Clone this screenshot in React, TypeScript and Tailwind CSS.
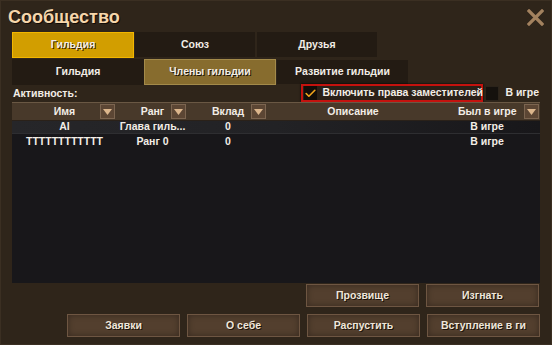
import { Check } from 'lucide-react'

const font = { fontFamily: '"Liberation Sans", Arial, sans-serif' }

function SortButton() {
  return (
    <div className="w-[15px] h-[15px] border border-[#7c6550] bg-[#5c4634] flex items-center justify-center">
      <svg width="9" height="6" viewBox="0 0 9 6">
        <polygon points="0,0 9,0 4.5,6" fill="#dcb68c" />
      </svg>
    </div>
  )
}

function HeaderCell({ label, width, sort }: { label: string; width: string; sort?: boolean }) {
  return (
    <div className={`${width} relative h-full flex items-center justify-center`}>
      <span>{label}</span>
      {sort && (
        <div className="absolute right-[2px] top-[1px]">
          <SortButton />
        </div>
      )}
    </div>
  )
}

const rows = [
  { name: 'AI', rank: 'Глава гиль...', contrib: '0', seen: 'В игре', active: true },
  { name: 'TTTTTTTTTTTT', rank: 'Ранг 0', contrib: '0', seen: 'В игре', active: false },
]

function ActionButton({ label }: { label: string }) {
  return (
    <div className="w-[113px] h-[23px] border border-[#6e5642] bg-[#533f2e] shadow-[inset_0_0_6px_rgba(0,0,0,0.35)] flex items-center justify-center text-[#efe6da] [text-shadow:1px_1px_0_#1a120b]">
      {label}
    </div>
  )
}

export default function App() {
  return (
    <div
      className="w-[552px] h-[345px] bg-[#2f251a] border border-[#3b2f22] flex flex-col text-[10.5px] font-bold text-[#f2ede6] whitespace-nowrap overflow-hidden"
      style={font}
    >
      {/* Title */}
      <div className="h-[31px] flex items-center justify-between pl-[7px] pr-[7px]">
        <span className="text-[18px] text-[#f6d6ab] [text-shadow:1px_1px_0_#120c07] pt-[2px]">Сообщество</span>
        <svg width="17" height="17" viewBox="0 0 17 17" className="mt-[2px]">
          <path d="M2 2 L15 15 M15 2 L2 15" stroke="#a3825f" strokeWidth="3.2" strokeLinecap="square" />
        </svg>
      </div>

      {/* Top tabs */}
      <div className="flex ml-[11px] h-[26px]">
        <div className="w-[122px] bg-[#d29e00] border border-[#f2b600] flex items-center justify-center [text-shadow:1px_1px_0_#3a2800]">
          Гильдия
        </div>
        <div className="w-[120px] ml-[1px] h-[25px] bg-[#231b13] flex items-center justify-center">Союз</div>
        <div className="w-[120px] ml-[2px] h-[25px] bg-[#231b13] flex items-center justify-center">Друзья</div>
      </div>

      {/* Sub tabs */}
      <div className="flex ml-[11px] mt-[1px] h-[26px]">
        <div className="w-[132px] bg-[#231b13] flex items-center justify-center">Гильдия</div>
        <div className="w-[132px] bg-[#876c2e] border border-[#a38a4a] flex items-center justify-center [text-shadow:1px_1px_0_#1e1508]">
          Члены гильдии
        </div>
        <div className="w-[131px] ml-[1px] mt-[1px] h-[24px] bg-[#231b13] flex items-center justify-center">
          Развитие гильдии
        </div>
      </div>

      {/* Activity row */}
      <div className="h-[18px] flex items-center ml-[12px] -mt-[1px]">
        <span className="pt-[2px]">Активность:</span>
        <div className="ml-auto flex items-center h-[18px] shrink-0">
          <div className="w-[182px] h-[18px] border-2 border-[#c4120e] bg-[#2a2017] flex items-center shrink-0 shadow-[0_0_2px_#000]">
            <div className="w-[13px] h-[14px] bg-[#120d09] ml-[1px] flex items-center justify-center shrink-0">
              <Check size={13} strokeWidth={3} color="#f2a51c" />
            </div>
            <span className="ml-[5px]">Включить права заместителей</span>
          </div>
          <div className="w-[14px] h-[15px] ml-[2px] bg-[#15110d] border border-[#2b231a] shrink-0" />
          <span className="ml-[6px] mr-[12px]">В игре</span>
        </div>
      </div>

      {/* Table */}
      <div className="ml-[11px] w-[528px] flex flex-col">
        <div className="h-[19px] flex bg-[#48392a] border-t border-[#6a5844] border-b border-b-[#2a2119]">
          <HeaderCell label="Имя" width="w-[105px]" sort />
          <HeaderCell label="Ранг" width="w-[71px]" sort />
          <HeaderCell label="Вклад" width="w-[80px]" sort />
          <HeaderCell label="Описание" width="w-[170px]" />
          <div className="w-[102px] relative h-full flex items-center">
            <span className="ml-[20px]">Был в игре</span>
            <div className="absolute right-[1px] top-[1px]">
              <SortButton />
            </div>
          </div>
        </div>
        <div className="h-[162px] bg-[#18171a] flex flex-col">
          {rows.map((r) => (
            <div
              key={r.name}
              className={`h-[13px] flex items-center ${
                r.active
                  ? 'bg-gradient-to-r from-[#262629] via-[#222225] to-transparent border-b border-[#2e2e31]'
                  : 'mt-[1px]'
              }`}
            >
              <div className="w-[105px] text-center">{r.name}</div>
              <div className="w-[71px] text-center">{r.rank}</div>
              <div className="w-[80px] text-center">{r.contrib}</div>
              <div className="w-[170px]" />
              <div className="w-[102px] text-center pr-[4px]">{r.seen}</div>
            </div>
          ))}
        </div>
      </div>

      {/* Buttons */}
      <div className="flex justify-end gap-[7px] pr-[12px] mt-[1px]">
        <ActionButton label="Прозвище" />
        <ActionButton label="Изгнать" />
      </div>
      <div className="flex justify-end gap-[7px] pr-[11px] mt-[7px]">
        <ActionButton label="Заявки" />
        <ActionButton label="О себе" />
        <ActionButton label="Распустить" />
        <ActionButton label="Вступление в ги" />
      </div>
    </div>
  )
}
